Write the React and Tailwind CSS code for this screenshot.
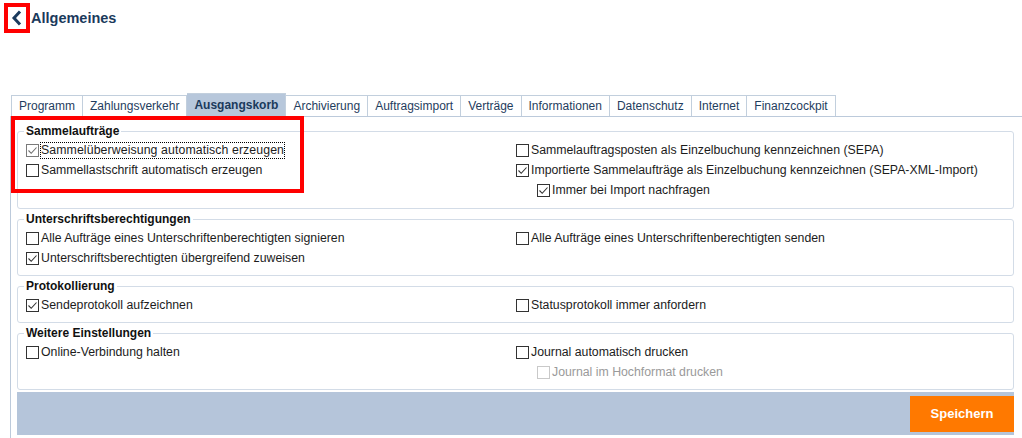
import React from 'react';

const tabs = [
    'Programm',
    'Zahlungsverkehr',
    'Ausgangskorb',
    'Archivierung',
    'Auftragsimport',
    'Verträge',
    'Informationen',
    'Datenschutz',
    'Internet',
    'Finanzcockpit',
];

const Checkbox = ({ checked, disabled, focus }) => {
    const border = disabled ? 'border-[#c9c9c9]' : focus ? 'border-[#7a7a7a]' : 'border-[#333]';
    return (
        <span className={`w-[13px] h-[13px] border ${border} bg-white flex-shrink-0 flex items-center justify-center`}>
            {checked && (
                <svg width="11" height="11" viewBox="0 0 11 11">
                    <path d="M1.5 5.5 L4.2 8.3 L9.5 2.5" fill="none" stroke={focus ? '#6f6f6f' : '#333'} strokeWidth="1.1" />
                </svg>
            )}
        </span>
    );
};

const Option = ({ label, checked, disabled, focus, indent }) => (
    <div className={`h-[20px] flex items-center gap-[2px] ${indent ? 'pl-[21px]' : ''}`}>
        <Checkbox checked={checked} disabled={disabled} focus={focus} />
        <span className={`leading-[15px] whitespace-nowrap ${disabled ? 'text-[#9a9a9a]' : 'text-[#1c1c1c]'} ${focus ? 'outline outline-1 outline-dotted outline-black tracking-[0.1px]' : ''}`}>
            {label}
        </span>
    </div>
);

const Group = ({ title, left, right, className = '' }) => (
    <fieldset className={`border border-[#d3dce7] rounded-[3px] pl-[8px] pr-[7px] pt-[2px] pb-[7px] ${className}`}>
        <legend className="-ml-[2px] px-[2px] font-bold text-[12px] leading-[14px] text-[#111]">{title}</legend>
        <div className="grid grid-cols-[490px_1fr] text-[12.3px]">
            <div>
                {left.map((o) => (
                    <Option key={o.label} {...o} />
                ))}
            </div>
            <div>
                {right.map((o) => (
                    <Option key={o.label} {...o} />
                ))}
            </div>
        </div>
    </fieldset>
);

export default function App() {
    return (
        <div className="relative w-[1022px] h-[438px] overflow-hidden bg-white text-[12px] font-['Liberation_Sans',Arial,sans-serif]">
            {/* Header */}
            <div className="flex items-center pt-[3px] pl-[4px]">
                <div className="w-[26px] h-[30px] border-4 border-[#f00] flex items-center justify-center">
                    <svg width="12" height="16" viewBox="0 0 12 16">
                        <path d="M9 1.5 L3 8 L9 14.5" fill="none" stroke="#1b3b5e" strokeWidth="3" />
                    </svg>
                </div>
                <h1 className="ml-[1px] mt-[1px] text-[14.5px] font-bold text-[#1b3a5c]">Allgemeines</h1>
            </div>

            <div className="ml-[10px] mt-[60px]">
                {/* Tabs */}
                <div className="flex items-end h-[24px] pl-[1px] border-b border-[#bccadb]">
                    {tabs.map((t, i) => {
                        const active = t === 'Ausgangskorb';
                        return (
                            <div
                                key={t}
                                className={`px-[7px] flex items-center border-t border-r border-[#c2cfdd] ${i === 0 ? 'border-l' : ''} ${active ? 'h-[23px] bg-[#b7c7db] font-bold text-[#1b3a5c]' : 'h-[21px] bg-white text-[#1f3d5e]'}`}
                            >
                                {t}
                            </div>
                        );
                    })}
                </div>

                {/* Content */}
                <div className="border-l border-[#bccadb] pl-[6px] pr-[8px] pt-[7px] h-[330px]">
                    <Group
                        title="Sammelaufträge"
                        className="pb-[8px]"
                        left={[
                            { label: 'Sammelüberweisung automatisch erzeugen', checked: true, focus: true },
                            { label: 'Sammellastschrift automatisch erzeugen' },
                        ]}
                        right={[
                            { label: 'Sammelauftragsposten als Einzelbuchung kennzeichnen (SEPA)' },
                            { label: 'Importierte Sammelaufträge als Einzelbuchung kennzeichnen (SEPA-XML-Import)', checked: true },
                            { label: 'Immer bei Import nachfragen', checked: true, indent: true },
                        ]}
                    />
                    <Group
                        title="Unterschriftsberechtigungen"
                        className="mt-[3px]"
                        left={[
                            { label: 'Alle Aufträge eines Unterschriftenberechtigten signieren' },
                            { label: 'Unterschriftsberechtigten übergreifend zuweisen', checked: true },
                        ]}
                        right={[{ label: 'Alle Aufträge eines Unterschriftenberechtigten senden' }]}
                    />
                    <Group
                        title="Protokollierung"
                        className="mt-[3px]"
                        left={[{ label: 'Sendeprotokoll aufzeichnen', checked: true }]}
                        right={[{ label: 'Statusprotokoll immer anfordern' }]}
                    />
                    <Group
                        title="Weitere Einstellungen"
                        className="mt-[3px]"
                        left={[{ label: 'Online-Verbindung halten' }]}
                        right={[
                            { label: 'Journal automatisch drucken' },
                            { label: 'Journal im Hochformat drucken', disabled: true, indent: true },
                        ]}
                    />

                    {/* Footer */}
                    <div className="mt-[2px] h-[43px] bg-[#b5c5da] flex items-center justify-end">
                        <button className="w-[104px] h-[36px] bg-[#ff7900] text-white font-bold text-[13px]">Speichern</button>
                    </div>
                </div>
            </div>

            {/* Annotation overlay */}
            <div className="absolute left-[11px] top-[116px] w-[293px] h-[77px] border-4 border-[#f00] pointer-events-none" />
        </div>
    );
}
